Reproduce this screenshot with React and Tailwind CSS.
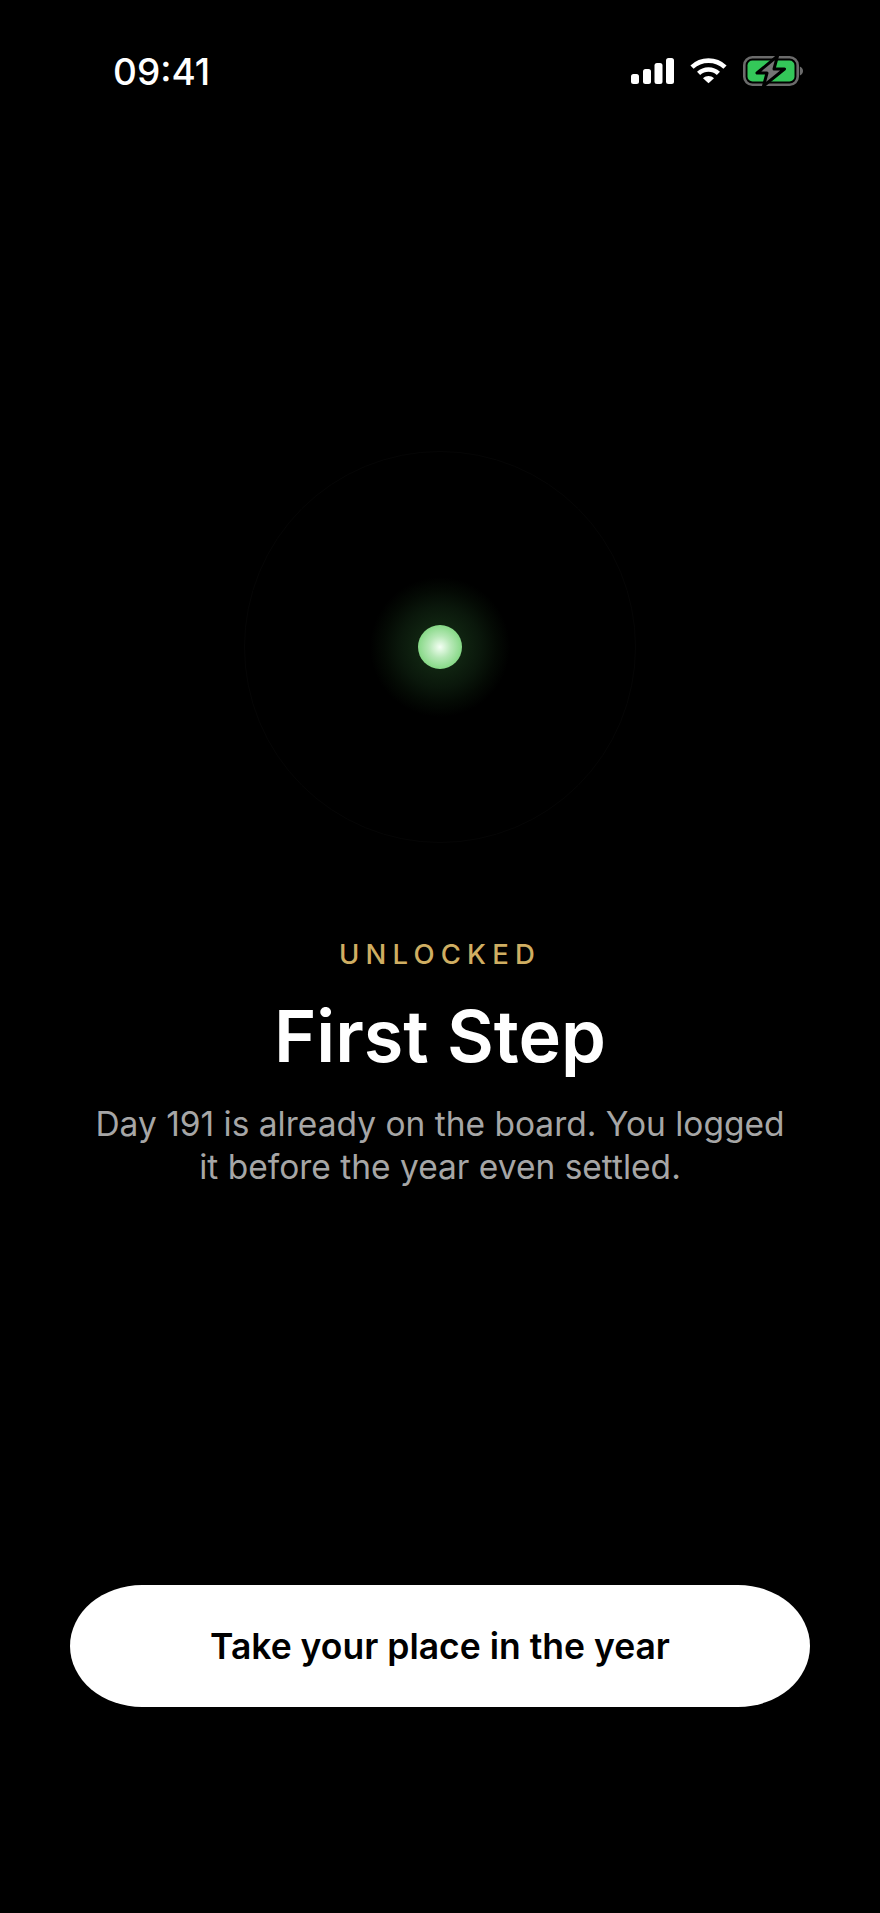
function Signal() {
  return (
    <svg width="43" height="26" viewBox="0 0 43 26" fill="#fff">
      <rect x="0" y="16" width="8" height="10" rx="2.5" />
      <rect x="12" y="11" width="8" height="15" rx="2.5" />
      <rect x="23.5" y="5" width="8" height="21" rx="2.5" />
      <rect x="35" y="0" width="8" height="26" rx="2.5" />
    </svg>
  );
}

function Wifi() {
  return (
    <svg width="37" height="26" viewBox="0 0 37 26" fill="none" stroke="#fff" strokeWidth="4.6">
      <path d="M2 9.2C11.2 .4 25.8 .4 35 9.2" />
      <path d="M8.6 15.4C14.2 10.2 22.8 10.2 28.4 15.4" />
      <path d="M18.5 25.2 13 20.2C16.2 17.4 20.8 17.4 24 20.2Z" fill="#fff" stroke="none" />
    </svg>
  );
}

function Battery() {
  return (
    <svg width="60" height="30" viewBox="0 0 60 30" fill="none">
      <rect x="1.3" y="1.3" width="53.4" height="27.4" rx="8" stroke="#6b6b6b" strokeWidth="2.6" />
      <rect x="4.5" y="4.5" width="47" height="21" rx="5" fill="#34c759" />
      <path d="M56.8 10.5c2 .6 3.2 2.4 3.2 4.5s-1.200 3.900-3.200 4.500Z" fill="#6b6b6b" />
      <path d="M34.500 0 14 17h10l-3.500 13L41.500 13H31Z" fill="#747474" stroke="#000" strokeWidth="3" strokeLinejoin="round" />
    </svg>
  );
}

export default function App() {
  return (
    <div className="h-[1913px] w-[880px] bg-black font-['Inter',sans-serif] flex flex-col items-center">
      <div className="w-full h-[451px] flex items-start justify-between pt-[50px] pl-[113px] pr-[77px]">
        <span className="text-[37px] leading-[44px] font-medium text-white">09:41</span>
        <div className="flex items-center gap-[16px] pt-[6px]">
          <Signal />
          <Wifi />
          <Battery />
        </div>
      </div>

      <div className="relative w-[392px] h-[392px] shrink-0 rounded-full border border-[#060606] flex items-center justify-center">
        <div className="absolute w-[140px] h-[140px] rounded-full bg-[radial-gradient(circle_closest-side,#102412_0%,#0f2210_35%,#0a170b_58%,#040a04_80%,#000000_100%)]" />
        <div className="relative w-[44px] h-[44px] rounded-full bg-[radial-gradient(circle_closest-side,#f4fff4_0%,#b6e8b6_50%,#86d886_100%)]" />
      </div>

      <p className="mt-[95px] text-[27.5px] leading-[32px] font-medium tracking-[0.225em] text-[#cfae62]">UNLOCKED</p>
      <h1 className="mt-[24px] text-[72px] leading-[84px] font-semibold text-white">First Step</h1>
      <p className="mt-[25px] w-[720px] text-center text-[33.5px] leading-[43px] text-[#a6a6a6]">
        Day 191 is already on the board. You logged
        <br />
        it before the year even settled.
      </p>

      <button className="mt-auto mb-[206px] w-[740px] h-[122px] pt-[2px] rounded-[72px/61px] bg-white text-black text-[35.5px] font-semibold">
        Take your place in the year
      </button>
    </div>
  );
}
